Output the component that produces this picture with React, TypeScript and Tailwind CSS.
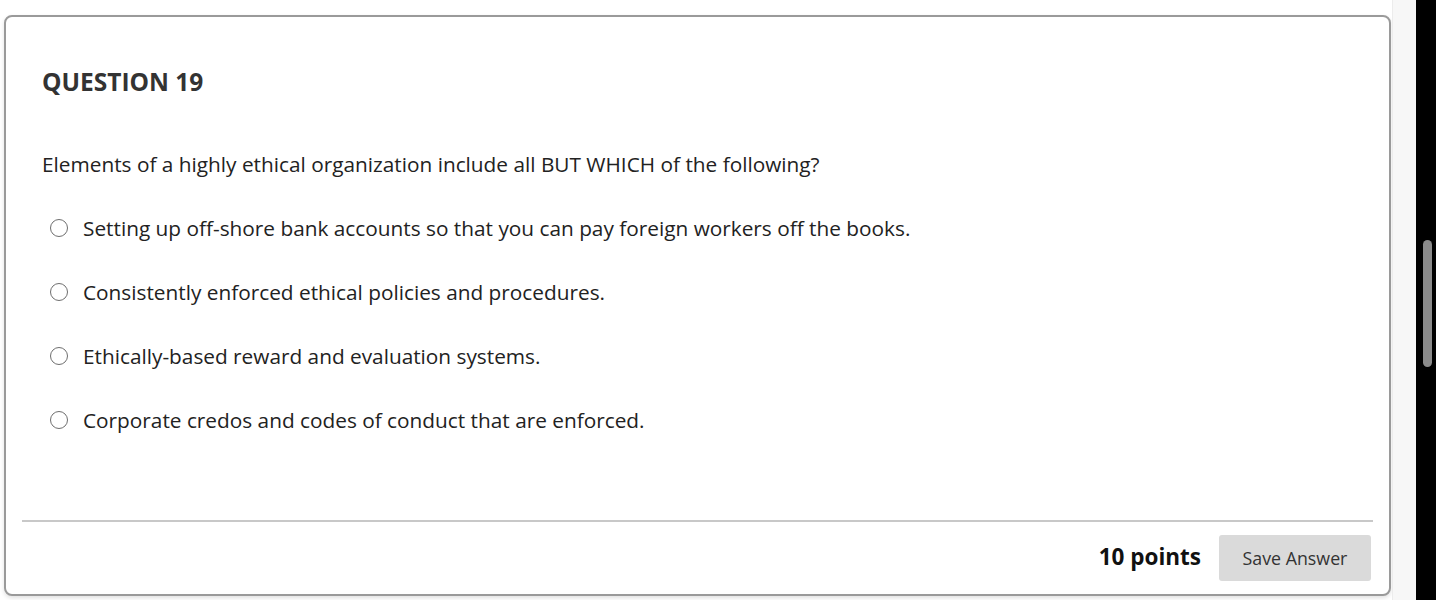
const options = [
  "Setting up off-shore bank accounts so that you can pay foreign workers off the books.",
  "Consistently enforced ethical policies and procedures.",
  "Ethically-based reward and evaluation systems.",
  "Corporate credos and codes of conduct that are enforced.",
];

export default function App() {
  return (
    <div className="flex h-[600px] w-[1436px] overflow-hidden bg-white font-['Open_Sans',sans-serif]">
      {/* Page */}
      <div className="w-[1392px] shrink-0 pl-[4px] pt-[15px]">
        <div className="flex h-[581px] w-[1387px] flex-col rounded-[8px] border-2 border-[#9a9a9a] bg-white shadow-[0_2px_4px_rgba(0,0,0,0.12)]">
          <h2 className="ml-[36px] mt-[49px] text-[24.5px] font-bold leading-[32px] text-[#333]">QUESTION 19</h2>

          <p className="ml-[36px] mt-[52px] text-[20.8px] leading-[28px] text-[#222]">
            Elements of a highly ethical organization include all BUT WHICH of the following?
          </p>

          <div className="ml-[44px] mt-[36px] flex flex-col gap-[36px]">
            {options.map((opt) => (
              <label key={opt} className="flex items-center gap-[15px] text-[20.8px] leading-[28px] text-[#222]">
                <span className="h-[18px] w-[18px] shrink-0 rounded-full border-[1.5px] border-[#6e6e6e] bg-white" />
                <span>{opt}</span>
              </label>
            ))}
          </div>

          <div className="flex-1" />

          <div className="mx-[16px] h-[2px] bg-[#c8c8c8]" />

          <div className="flex items-center justify-end gap-[18px] pr-[18px] pt-[13px] pb-[13px]">
            <span className="mb-[3px] text-[22.5px] font-bold text-[#111]">10 points</span>
            <button className="h-[46px] w-[152px] rounded-[3px] bg-[#dadada] text-[17.8px] text-[#333]">
              Save Answer
            </button>
          </div>
        </div>
      </div>

      {/* Scroll area */}
      <div className="w-[24px] shrink-0 border-l border-[#ececec] bg-[#f7f7f7]" />
      <div className="w-[20px] shrink-0 bg-black pt-[240px]">
        <div className="ml-[7px] h-[127px] w-[9px] rounded-full bg-[#8a8a8a]" />
      </div>
    </div>
  );
}
